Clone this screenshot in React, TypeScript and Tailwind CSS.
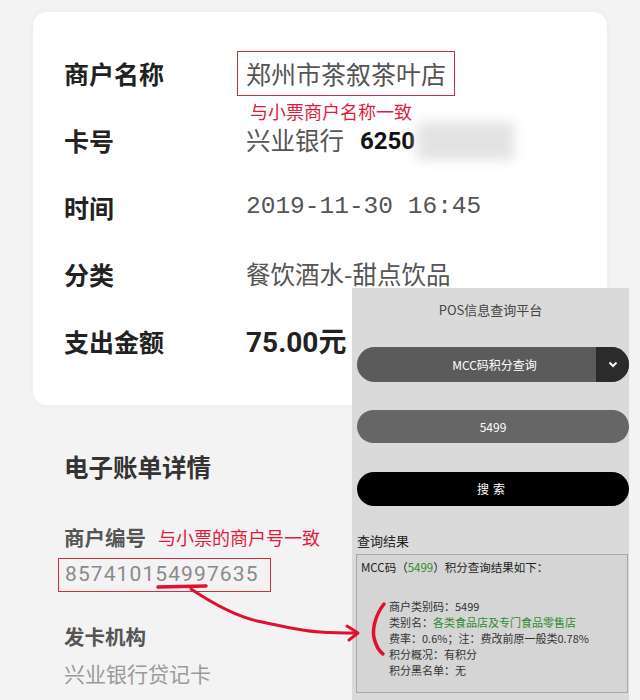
const cjk = { fontFamily: '"Noto Sans CJK SC", "Noto Sans", sans-serif' };
const mono = { fontFamily: '"Liberation Mono", "Noto Sans CJK SC", monospace' };
const roboto = { fontFamily: 'Roboto, "Noto Sans CJK SC", sans-serif' };

const rows = [
  { label: "商户名称", key: "name" },
  { label: "卡号", key: "card" },
  { label: "时间", key: "time" },
  { label: "分类", key: "cat" },
  { label: "支出金额", key: "amount" },
];

function RowValue({ k }: { k: string }) {
  if (k === "name") {
    return (
      <div className="relative">
        <div className="h-[45px] -ml-[9px] px-[8px] flex items-center border-[1.5px] border-[#cc2f3f] text-[25px] text-[#555]">
          郑州市茶叙茶叶店
        </div>
        <div className="absolute left-[4px] top-[49px] whitespace-nowrap text-[18px] leading-[22px] text-[#e21b3c]">
          与小票商户名称一致
        </div>
      </div>
    );
  }
  if (k === "card") {
    return (
      <div className="flex items-center">
        <span className="text-[24.5px] text-[#555]">兴业银行</span>
        <span className="ml-[16px] text-[24px] font-bold text-[#111]" style={roboto}>
          6250
        </span>
        <div className="ml-[2px] w-[97px] h-[38px] bg-[#e3e3e3] blur-[6px]" />
      </div>
    );
  }
  if (k === "time") {
    return (
      <span className="text-[24.5px] text-[#555]" style={mono}>
        2019-11-30 16:45
      </span>
    );
  }
  if (k === "cat") {
    return <span className="text-[24.5px] text-[#555]">餐饮酒水-甜点饮品</span>;
  }
  return (
    <span className="text-[28px] font-bold text-[#222]">
      <span style={roboto}>75.00</span>元
    </span>
  );
}

export default function App() {
  return (
    <div className="relative w-[640px] h-[700px] overflow-hidden bg-[#f3f3f3]" style={cjk}>
      <div className="ml-[33px] mt-[12px] w-[574px] h-[393px] rounded-[14px] bg-white pt-[28px] pl-[31px] shadow-[0_0_6px_rgba(0,0,0,0.04)]">
        {rows.map((r) => (
          <div key={r.key} className="h-[67px] flex items-center">
            <div className="w-[182px] text-[25px] font-bold text-[#222]">{r.label}</div>
            <RowValue k={r.key} />
          </div>
        ))}
      </div>

      <div className="pl-[64px]">
        <div className="mt-[47px] text-[24.5px] leading-[30px] font-bold text-[#333]">电子账单详情</div>
        <div className="mt-[41px] flex items-center h-[28px]">
          <span className="text-[20.5px] font-bold text-[#555]">商户编号</span>
          <span className="ml-[12px] text-[18px] text-[#e21b3c]">与小票的商户号一致</span>
        </div>
        <div className="mt-[7px] -ml-[6px] w-[213px] h-[34px] flex items-center pl-[6px] border-[1.5px] border-[#cc2f3f]">
          <span className="text-[21px] tracking-[1.1px] text-[#8a8a8a]" style={roboto}>
            857410154997635
          </span>
        </div>
        <div className="mt-[30px] text-[20.5px] leading-[28px] font-bold text-[#555]">发卡机构</div>
        <div className="mt-[9px] text-[21px] leading-[28px] text-[#9a9a9a]">兴业银行贷记卡</div>
      </div>

      {/* POS query screenshot pasted over the page */}
      <div className="absolute left-[352px] top-[288px] w-[277px] h-[412px] bg-[#dadada] pl-[5px]">
        <div className="pt-[12px] text-center text-[13px] leading-[20px] text-[#444] pr-[5px]">POS信息查询平台</div>
        <div className="mt-[27px] h-[35px] flex rounded-full overflow-hidden bg-[#5b5b5b]">
          <div className="flex-1 flex items-center justify-center text-[12px] text-white pl-[36px]">MCC码积分查询</div>
          <div className="w-[33px] bg-[#2b2b2b] flex items-center justify-center">
            <svg width="10" height="7" viewBox="0 0 10 7">
              <path d="M1.5 1.5 L5 5 L8.5 1.5" stroke="white" strokeWidth="2" fill="none" />
            </svg>
          </div>
        </div>
        <div className="mt-[28px] h-[33px] rounded-full bg-[#666] flex items-center justify-center text-[12px] text-white">
          5499
        </div>
        <div className="mt-[29px] h-[34px] rounded-full bg-black flex items-center justify-center text-[12px] text-white tracking-[4px]">
          搜索
        </div>
        <div className="mt-[25px] text-[13px] leading-[20px] text-[#222]">查询结果</div>
        <div className="mt-[3px] -ml-[1px] w-[272px] h-[139px] border border-[#a9a9a9] bg-[#d5d5d5] pt-[4px] pl-[4px] text-[11.5px] leading-[16px] text-[#222]">
          <div>
            MCC码（<span className="text-[#2f8a2f]">5499</span>）积分查询结果如下：
          </div>
          <div className="mt-[23px] ml-[28px] text-[11px] text-[#333]">
            <div>商户类别码：5499</div>
            <div>
              类别名：<span className="text-[#2f8a2f]">各类食品店及专门食品零售店</span>
            </div>
            <div>费率：0.6%；注：费改前原一般类0.78%</div>
            <div>积分概况：有积分</div>
            <div>积分黑名单：无</div>
          </div>
        </div>
      </div>

      {/* red hand-drawn annotations */}
      <svg className="absolute inset-0 pointer-events-none" width="640" height="700" viewBox="0 0 640 700">
        <path d="M158 587 L206 586" stroke="#e0102f" strokeWidth="3.5" strokeLinecap="round" fill="none" />
        <path
          d="M191 589 C215 605 240 618 262 622 C285 627 300 631 320 632 C335 633 347 633 357 633"
          stroke="#e0102f"
          strokeWidth="3"
          strokeLinecap="round"
          fill="none"
        />
        <path d="M347 626 L358 633 L349 640" stroke="#e0102f" strokeWidth="3" strokeLinecap="round" strokeLinejoin="round" fill="none" />
        <path d="M384 604 C376 614 372 628 374 638 C376 646 379 651 383 654" stroke="#e0102f" strokeWidth="3.5" strokeLinecap="round" fill="none" />
      </svg>
    </div>
  );
}
